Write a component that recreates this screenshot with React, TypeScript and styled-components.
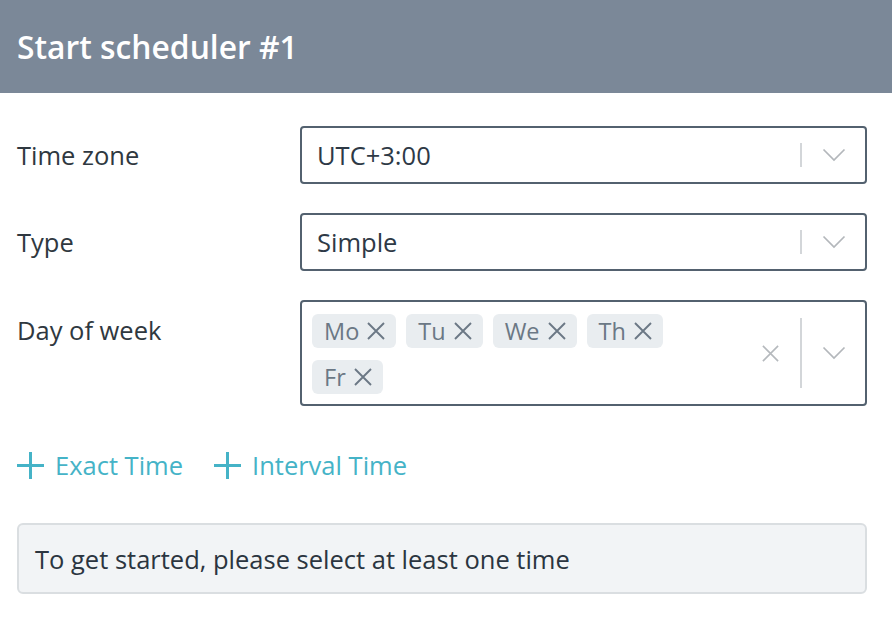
import * as React from 'react';
import styled, { createGlobalStyle } from 'styled-components';

const GlobalStyle = createGlobalStyle`
  html, body {
    margin: 0;
    padding: 0;
    background: #fff;
    font-family: 'Open Sans', 'Liberation Sans', sans-serif;
  }
  * { box-sizing: border-box; }
`;

const Header = styled.header`
  height: 93px;
  background: #7b8898;
  display: flex;
  align-items: center;
  padding-left: 17px;
`;

const Title = styled.h1`
  margin: 0;
  color: #fff;
  font-size: 31.8px;
  font-weight: 600;
`;

const Body = styled.div`
  padding: 33px 25px 0 17px;
`;

const Form = styled.div`
  display: grid;
  grid-template-columns: 283px 1fr;
  row-gap: 29px;
`;

const Label = styled.label<{ $top?: number }>`
  color: #2f3840;
  font-size: 25.5px;
  line-height: 30px;
  padding-top: ${(p) => p.$top ?? 14}px;
`;

const Control = styled.div<{ $multi?: boolean }>`
  display: flex;
  align-items: stretch;
  min-height: ${(p) => (p.$multi ? 106 : 58)}px;
  border: 2px solid #53616f;
  border-radius: 4px;
  background: #fff;
`;

const Values = styled.div<{ $multi?: boolean }>`
  flex: 1;
  display: flex;
  flex-wrap: wrap;
  align-content: ${(p) => (p.$multi ? 'flex-start' : 'center')};
  align-items: center;
  gap: 12px 10px;
  padding: ${(p) => (p.$multi ? '12px 12px 0 10px' : '0 0 0 15px')};
  color: #2e3946;
  font-size: 25.5px;
`;

const Tag = styled.span`
  display: inline-flex;
  align-items: center;
  gap: 7px;
  height: 34px;
  padding: 0 10px 0 12px;
  border-radius: 6px;
  background: #e9edf0;
  color: #6b7885;
  font-size: 23.5px;
`;

const Indicators = styled.div`
  display: flex;
  align-items: center;
  width: 125px;
  flex: none;
  justify-content: flex-end;
`;

const IndicatorBtn = styled.span<{ $w: number }>`
  width: ${(p) => p.$w}px;
  display: flex;
  align-items: center;
  justify-content: center;
`;

const Sep = styled.span<{ $h: number }>`
  width: 2px;
  height: ${(p) => p.$h}px;
  background: #d3d6d9;
`;

const Links = styled.div`
  display: flex;
  gap: 31px;
  margin-top: 42px;
`;

const AddLink = styled.a`
  display: inline-flex;
  align-items: center;
  gap: 11px;
  color: #45b3c7;
  font-size: 25.5px;
  cursor: pointer;
`;

const Notice = styled.div`
  margin-top: 41px;
  height: 71px;
  display: flex;
  align-items: center;
  padding-left: 16px;
  background: #f2f4f6;
  border: 2px solid #dadee1;
  border-radius: 6px;
  color: #2b3540;
  font-size: 25.5px;
`;

const Chevron = () => (
  <svg width="24" height="14" viewBox="0 0 24 14" fill="none">
    <path d="M1.5 1.5 L12 12 L22.5 1.5" stroke="#b3b7bb" strokeWidth="1.7" />
  </svg>
);

const Cross = ({ size, color, w = 1.8 }: { size: number; color: string; w?: number }) => (
  <svg width={size} height={size} viewBox="0 0 20 20" fill="none">
    <path d="M2 2 L18 18 M18 2 L2 18" stroke={color} strokeWidth={w} />
  </svg>
);

const Plus = () => (
  <svg width="27" height="27" viewBox="0 0 27 27" fill="none">
    <path d="M13.5 0 V27 M0 13.5 H27" stroke="#45b3c7" strokeWidth="3" />
  </svg>
);

const days = ['Mo', 'Tu', 'We', 'Th', 'Fr'];

export default function App() {
  return (
    <>
      <GlobalStyle />
      <Header>
        <Title>Start scheduler #1</Title>
      </Header>
      <Body>
        <Form>
          <Label>Time zone</Label>
          <Control>
            <Values>UTC+3:00</Values>
            <Indicators>
              <Sep $h={24} />
              <IndicatorBtn $w={63}>
                <Chevron />
              </IndicatorBtn>
            </Indicators>
          </Control>

          <Label>Type</Label>
          <Control>
            <Values>Simple</Values>
            <Indicators>
              <Sep $h={24} />
              <IndicatorBtn $w={63}>
                <Chevron />
              </IndicatorBtn>
            </Indicators>
          </Control>

          <Label $top={15}>Day of week</Label>
          <Control $multi>
            <Values $multi>
              {days.map((d) => (
                <Tag key={d}>
                  {d}
                  <Cross size={20} color="#6b7885" w={1.9} />
                </Tag>
              ))}
            </Values>
            <Indicators>
              <IndicatorBtn $w={60}>
                <Cross size={19} color="#b5b9bd" w={1.7} />
              </IndicatorBtn>
              <Sep $h={70} />
              <IndicatorBtn $w={63}>
                <Chevron />
              </IndicatorBtn>
            </Indicators>
          </Control>
        </Form>

        <Links>
          <AddLink>
            <Plus />
            Exact Time
          </AddLink>
          <AddLink>
            <Plus />
            Interval Time
          </AddLink>
        </Links>

        <Notice>To get started, please select at least one time</Notice>
      </Body>
    </>
  );
}
